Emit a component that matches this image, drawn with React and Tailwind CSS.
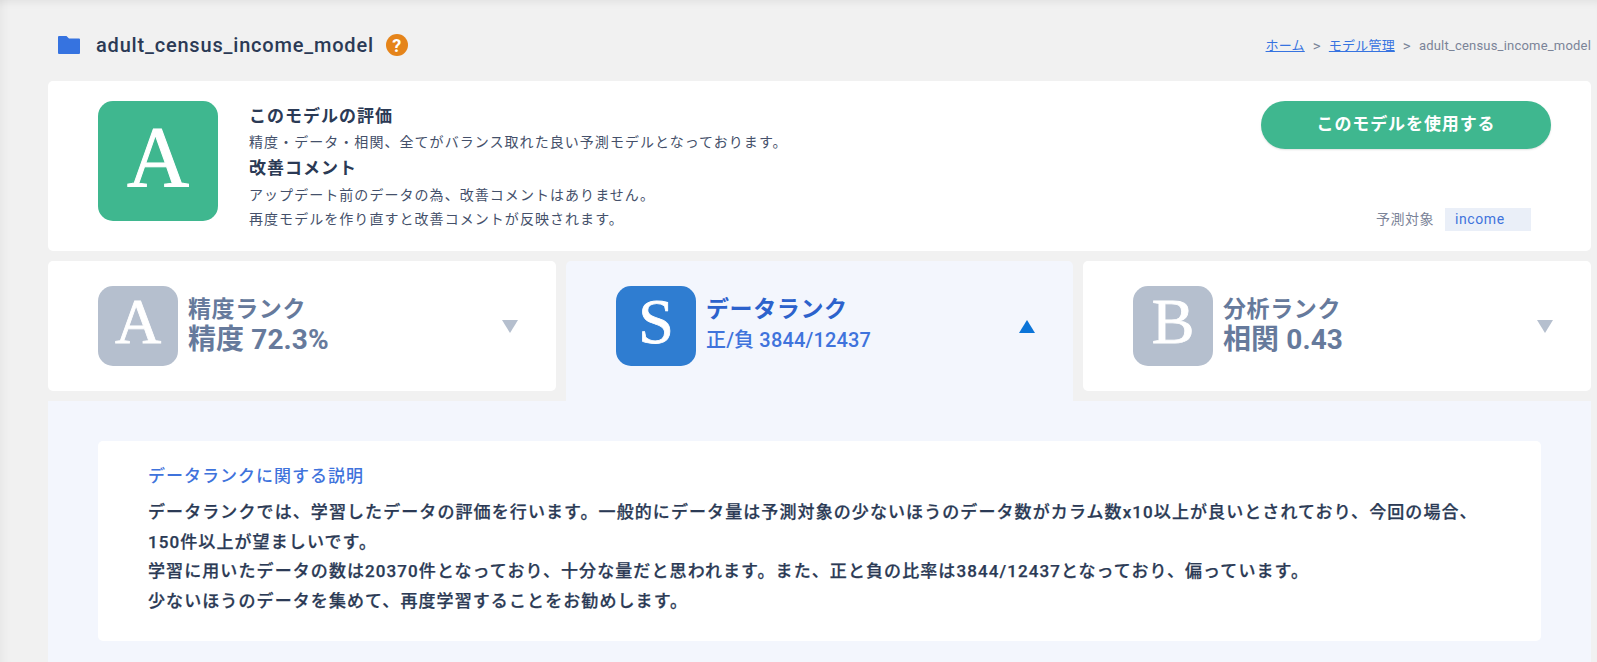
import React from "react";

function RankBadge({ letter, color }) {
  return (
    <div className={`${color} w-[80px] h-[80px] pb-[8px] shrink-0 rounded-[15px] flex items-center justify-center text-white text-[64px] leading-none [-webkit-text-stroke:0.8px_white] font-['Liberation_Serif',serif]`}>
      {letter}
    </div>
  );
}

function Triangle({ up }) {
  return (
    <svg width="16" height="13" viewBox="0 0 16 13" className="shrink-0">
      {up ? <path d="M8 0L16 13H0z" fill="#0b74d8" /> : <path d="M0 0H16L8 13z" fill="#b5bfce" />}
    </svg>
  );
}

export default function App() {
  return (
    <div className="relative h-[662px] overflow-hidden bg-[#f1f1f1] pl-[48px] pr-[6px] font-['Roboto','Noto_Sans_CJK_JP',sans-serif] shadow-[inset_0_8px_8px_-6px_rgba(0,0,0,0.07),inset_12px_0_10px_-8px_rgba(0,0,0,0.04)]">
      {/* page header */}
      <div className="h-[81px] flex items-start justify-between">
        <div className="flex items-center mt-[31px] ml-[10px]">
          <svg width="22" height="18" viewBox="0 0 22 18" className="mr-[16px]">
            <path d="M0 1a1 1 0 0 1 1-1h7.500l2.500 2.500h10a1 1 0 0 1 1 1V17a1 1 0 0 1-1 1H1a1 1 0 0 1-1-1z" fill="#3673e0" />
          </svg>
          <h1 className="text-[20px] leading-[28px] font-medium tracking-[0.8px] text-[#2b3a55]">adult_census_income_model</h1>
          <span className="ml-[12px] w-[22px] h-[22px] rounded-full bg-[#e5841a] text-white text-[18px] font-bold flex items-center justify-center">?</span>
        </div>
        <div className="mt-[37px] text-[13px] leading-[18px] tracking-[0.2px] text-[#7b8498] flex items-center whitespace-nowrap">
          <a className="underline text-[#3673e0]">ホーム</a>
          <span className="mx-[8px] text-[15px]">&gt;</span>
          <a className="underline text-[#3673e0]">モデル管理</a>
          <span className="mx-[8px] text-[15px]">&gt;</span>
          <span>adult_census_income_model</span>
        </div>
      </div>

      {/* model evaluation */}
      <div className="h-[170px] bg-white rounded-[5px] pl-[50px] pr-[40px] pt-[20px] flex">
        <div className="w-[120px] h-[120px] pb-[8px] shrink-0 rounded-[15px] bg-[#3fb78f] flex items-center justify-center text-white text-[86px] leading-none [-webkit-text-stroke:1px_white] font-['Liberation_Serif',serif]">
          A
        </div>
        <div className="ml-[31px] flex-1 text-[#2b3a55] pt-[1px]">
          <h2 className="text-[17px] leading-[28px] font-bold tracking-[1px]">このモデルの評価</h2>
          <p className="text-[14px] leading-[24px] tracking-[1.05px] text-[#44506a]">精度・データ・相関、全てがバランス取れた良い予測モデルとなっております。</p>
          <h2 className="text-[17px] leading-[29px] font-bold tracking-[1px]">改善コメント</h2>
          <p className="text-[14px] leading-[24px] tracking-[1.05px] text-[#44506a]">アップデート前のデータの為、改善コメントはありません。</p>
          <p className="text-[14px] leading-[24px] tracking-[1.05px] text-[#44506a]">再度モデルを作り直すと改善コメントが反映されます。</p>
        </div>
        <div className="w-[290px] shrink-0 flex flex-col">
          <button className="h-[48px] rounded-full bg-[#3fb78f] text-white text-[17px] font-bold tracking-[0.9px] shadow-[0_1px_2px_rgba(0,0,0,0.12)]">このモデルを使用する</button>
          <div className="mt-[59px] flex items-center justify-end pr-[20px]">
            <span className="text-[14px] tracking-[0.5px] text-[#7b8498] mr-[11px]">予測対象</span>
            <span className="w-[86px] h-[23px] bg-[#eaeff8] text-[#3f73dc] text-[14px] tracking-[0.6px] leading-[23px] pl-[10px]">income</span>
          </div>
        </div>
      </div>

      {/* rank tabs */}
      <div className="mt-[10px] grid grid-cols-[508px_507px_508px] gap-[10px] w-[1543px] h-[140px]">
        <div className="h-[130px] bg-white rounded-[5px] pl-[50px] pr-[38px] flex items-center">
          <RankBadge letter="A" color="bg-[#b5bfce]" />
          <div className="ml-[10px] flex-1 text-[#667a9c] font-bold">
            <div className="text-[23px] leading-[28px] tracking-[0.6px]">精度ランク</div>
            <div className="text-[28px] leading-[32px] tracking-[0.1px]">精度 72.3%</div>
          </div>
          <Triangle />
        </div>
        <div className="h-[140px] bg-[#f3f6fd] rounded-t-[5px] pl-[50px] pr-[38px] pb-[10px] flex items-center">
          <RankBadge letter="S" color="bg-[#2f7dd1]" />
          <div className="ml-[10px] flex-1">
            <div className="text-[23px] leading-[28px] tracking-[0.6px] font-bold text-[#2c62cc]">データランク</div>
            <div className="text-[20px] leading-[32px] tracking-[0.15px] font-medium text-[#3f73dc]">正/負 3844/12437</div>
          </div>
          <Triangle up />
        </div>
        <div className="h-[130px] bg-white rounded-[5px] pl-[50px] pr-[38px] flex items-center">
          <RankBadge letter="B" color="bg-[#b5bfce]" />
          <div className="ml-[10px] flex-1 text-[#667a9c] font-bold">
            <div className="text-[23px] leading-[28px] tracking-[0.6px]">分析ランク</div>
            <div className="text-[28px] leading-[32px] tracking-[0.1px]">相関 0.43</div>
          </div>
          <Triangle />
        </div>
      </div>

      {/* rank description */}
      <div className="w-[1543px] h-[261px] bg-[#f3f6fd] pt-[40px] px-[50px]">
        <div className="h-[200px] bg-white rounded-[5px] pl-[50px] pr-[50px] pt-[21px]">
          <h3 className="text-[17px] leading-[28px] font-medium text-[#3f73dc] tracking-[1px]">データランクに関する説明</h3>
          <p className="mt-[8px] text-[17px] leading-[29.6px] font-medium [-webkit-text-stroke:0.25px_#2b3a55] text-[#2b3a55] tracking-[1.09px]">
            データランクでは、学習したデータの評価を行います。一般的にデータ量は予測対象の少ないほうのデータ数がカラム数x10以上が良いとされており、今回の場合、<br />
            150件以上が望ましいです。<br />
            学習に用いたデータの数は20370件となっており、十分な量だと思われます。また、正と負の比率は3844/12437となっており、偏っています。<br />
            少ないほうのデータを集めて、再度学習することをお勧めします。
          </p>
        </div>
      </div>
    </div>
  );
}
